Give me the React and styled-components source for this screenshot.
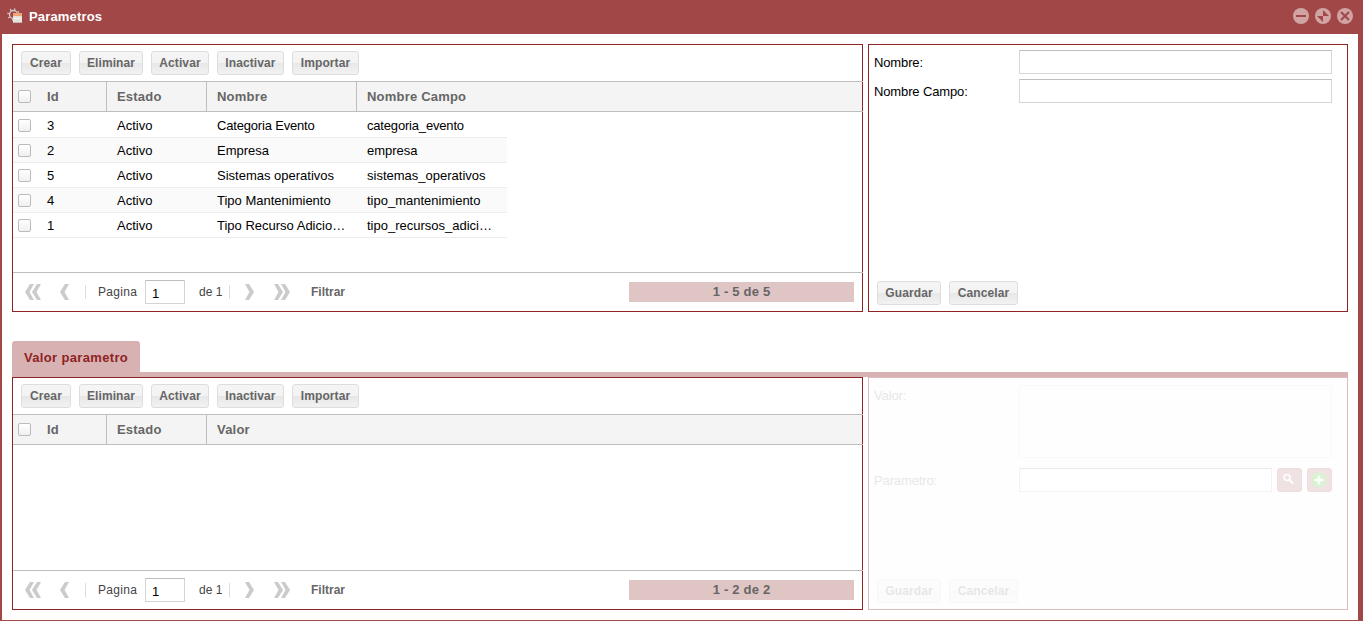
import React from "react";
import styled, { createGlobalStyle } from "styled-components";

const GlobalStyle = createGlobalStyle`
  * { box-sizing: border-box; }
  body { margin: 0; background: #fff; font-family: "Liberation Sans", Arial, sans-serif; font-size: 13px; color: #000; }
`;

const Window = styled.div`
  width: 1363px;
  height: 621px;
  display: flex;
  flex-direction: column;
  background: #fff;
  border: solid #a24747;
  border-width: 0 5px 1px 2px;
`;

const TitleBar = styled.header`
  height: 34px;
  flex: none;
  margin: 0 -5px 0 -2px;
  padding: 0 10px 2px 7px;
  display: flex;
  align-items: center;
  background: #a24747;
  color: #fff;
`;

const Title = styled.h1`
  margin: 0 auto 0 6px;
  padding-top: 2px;
  font-size: 13px;
  line-height: 16px;
  font-weight: bold;
  letter-spacing: 0.17px;
`;

const WindowTools = styled.div`
  display: flex;
  gap: 6px;
  svg { display: block; }
`;

const Content = styled.main`
  flex: 1;
  display: flex;
  flex-direction: column;
  padding: 10px 10px 10px 10px;
`;

const Split = styled.section`
  display: grid;
  grid-template-columns: 851px 480px;
  column-gap: 5px;
  height: ${(p) => p.$height}px;
`;

const Panel = styled.div`
  display: flex;
  flex-direction: column;
  min-width: 0;
  border: 1px solid ${(p) => (p.$muted ? "#dcbcbc" : "#8e2323")};
  background: ${(p) => (p.$muted ? "#fefefe" : "#fff")};
`;

const Toolbar = styled.div`
  display: flex;
  gap: 8px;
  padding: 6px 8px;
  height: 36px;
  flex: none;
`;

const Button = styled.button`
  width: ${(p) => p.$width}px;
  height: 24px;
  padding: 0 0 1px;
  border: 1px solid #ddd;
  border-radius: 3px;
  background: linear-gradient(#f5f5f5 0, #f3f3f3 50%, #e7e7e7 50%, #f2f2f2 100%);
  color: #666;
  font: bold 12px/20px "Liberation Sans", Arial, sans-serif;
  letter-spacing: 0.1px;
  white-space: nowrap;
`;

const HeadRow = styled.div`
  display: flex;
  height: 31px;
  flex: none;
  margin-right: -1px;
  border: solid #bebebe;
  border-width: 1px 0;
  background: #f4f4f4;
  position: relative;
`;

const HeadEdge = styled.span`
  width: 1px;
  margin-left: auto;
  background: #8e2323;
`;

const cellPadding = "0 9px 0 10px";

const HeadCell = styled.div`
  width: ${(p) => p.$width}px;
  padding: ${(p) => (p.$first ? "0 5px" : cellPadding)};
  display: flex;
  align-items: center;
  border-right: ${(p) => (p.$last ? "0" : "1px solid #bebebe")};
  color: #666;
  font-weight: bold;
  letter-spacing: 0.2px;
  white-space: nowrap;
`;

const Check = styled.span`
  width: 13px;
  height: 13px;
  flex: none;
  margin-right: ${(p) => p.$gap || 0}px;
  border: 1px solid #bbb;
  border-radius: 2px;
  background: linear-gradient(#fff, #f0f0f0);
`;

const Body = styled.div`
  flex: 1;
  padding-top: 1px;
`;

const Row = styled.div`
  width: 494px;
  height: 25px;
  display: flex;
  border-bottom: 1px solid #ededed;
  background: ${(p) => (p.$odd ? "#fafafa" : "#fff")};
`;

const Cell = styled.div`
  width: ${(p) => p.$width}px;
  padding: ${(p) => (p.$first ? "0 5px" : cellPadding)};
  display: ${(p) => (p.$first ? "flex" : "block")};
  align-items: center;
  white-space: nowrap;
  line-height: 25px;
  letter-spacing: ${(p) => (p.$tight ? -0.18 : 0)}px;
`;

const Footer = styled.footer`
  height: 39px;
  flex: none;
  display: flex;
  align-items: center;
  margin-right: -1px;
  padding: 0 9px 1px 12px;
  border-top: 1px solid #bebebe;
  font-size: 12px;
  color: #444;
  white-space: nowrap;
  svg { flex: none; display: block; }
`;

const FootGap = styled.span`
  width: ${(p) => p.$w}px;
  flex: none;
`;

const Separator = styled.span`
  width: 1px;
  height: 14px;
  flex: none;
  background: #ddd;
`;

const Word = styled.span`
  width: ${(p) => p.$width}px;
  flex: none;
  letter-spacing: ${(p) => p.$spacing || 0}px;
`;

const PageInput = styled.input`
  width: 40px;
  height: 24px;
  padding: 3px 6px 0;
  border: 1px solid #d4d4d4;
  border-top-color: #bebebe;
  font: 13px "Liberation Sans", Arial, sans-serif;
  color: #000;
  background: #fff;
`;

const Filter = styled.span`
  font-weight: bold;
  color: #666;
`;

const Count = styled.span`
  width: 225px;
  height: 20px;
  margin-left: auto;
  background: #e0c5c5;
  color: #666;
  text-align: center;
  font: bold 13px/20px "Liberation Sans", Arial, sans-serif;
  letter-spacing: 0.2px;
`;

const Form = styled.div`
  flex: 1;
  display: flex;
  flex-direction: column;
  gap: ${(p) => p.$gap}px;
  padding: ${(p) => p.$top}px 15px 0 5px;
`;

const Field = styled.label`
  display: grid;
  grid-template-columns: 145px 1fr;
`;

const Controls = styled.span`
  display: flex;
  gap: 5px;
`;

const Input = styled.input`
  flex: 1;
  min-width: 0;
  width: 100%;
  height: 24px;
  padding: 0 5px;
  border: 1px solid ${(p) => (p.$muted ? "#f2f2f2" : "#d6d6d6")};
  border-top-color: ${(p) => (p.$muted ? "#e9e9e9" : "#bebebe")};
  background: #fff;
`;

const TextArea = styled.textarea`
  display: block;
  width: 100%;
  height: 73px;
  resize: none;
  border: 1px solid #f9f9f9;
  background: #fefefe;
`;

const Label = styled.span`
  padding-top: ${(p) => (p.$top ? 0 : 2)}px;
  color: ${(p) => (p.$muted ? "#e8e8e8" : "#000")};
  line-height: 22px;
  letter-spacing: -0.13px;
  white-space: nowrap;
`;

const IconButton = styled.button`
  width: 25px;
  height: 24px;
  padding: 0;
  border: 1px solid #efdcdc;
  border-radius: 3px;
  background: #f0e2e2;
  svg { display: block; }
`;

const Actions = styled.div`
  display: flex;
  gap: 8px;
  padding: 0 8px 6px;
  opacity: ${(p) => (p.$muted ? 0.15 : 1)};
`;

const TabStrip = styled.nav`
  margin-top: 29px;
  height: 36px;
  flex: none;
  border-bottom: 5px solid #d8b2b2;
`;

const Tab = styled.span`
  display: block;
  width: 128px;
  height: 31px;
  padding-left: 12px;
  border-radius: 3px 3px 0 0;
  background: #d8b2b2;
  color: #8e2323;
  font-weight: bold;
  line-height: 33px;
  letter-spacing: 0.34px;
  white-space: nowrap;
`;

const AppIcon = () => (
  <svg width="16" height="16" viewBox="0 0 16 16">
    <circle cx="6.5" cy="6.5" r="4" fill="none" stroke="#d5d0cd" strokeWidth="1.3" />
    <circle cx="6.5" cy="6.5" r="5.5" fill="none" stroke="#d5d0cd" strokeWidth="1.4" strokeDasharray="1.3 3.02" />
    <rect x="6" y="5" width="9" height="10" fill="#e6e3dc" />
    <rect x="6" y="5" width="9" height="3" fill="#f0a477" />
    <path d="M6 14.5h9" stroke="#c3bdb8" />
    <path d="M7 10.5h7" stroke="#f4f2ee" />
  </svg>
);

const ToolIcon = ({ type }) => (
  <svg width="16" height="16" viewBox="0 0 16 16">
    <circle cx="8" cy="8" r="8" fill="#d1a3a3" />
    {type === "min" && <rect x="3" y="7" width="10" height="2" fill="#a24747" />}
    {type === "max" && <path d="M8 2L14 8H8ZM2 8H8V14Z" fill="#a24747" />}
    {type === "close" && <path d="M4 4l8 8M12 4l-8 8" stroke="#a24747" strokeWidth="2" />}
  </svg>
);

const Chevrons = ({ count = 1, flip }) => {
  const w = count === 2 ? 16 : 9;
  return (
    <svg width={w} height="16" viewBox={`0 0 ${w} 16`}>
      <g fill="#cbcbcb" transform={flip ? `translate(${w} 0) scale(-1 1)` : undefined}>
        <path d="M5 0H9L4.5 8L9 16H5L0 8Z" />
        {count === 2 && <path d="M12 0H16L11.5 8L16 16H12L7 8Z" />}
      </g>
    </svg>
  );
};

const SearchIcon = () => (
  <svg width="23" height="22" viewBox="0 0 23 22">
    <circle cx="9" cy="8.5" r="3" fill="none" stroke="#fff" strokeWidth="1.7" />
    <path d="M11.3 10.8L14.5 14" stroke="#fff" strokeWidth="2.2" strokeLinecap="round" />
  </svg>
);

const AddIcon = () => (
  <svg width="23" height="22" viewBox="0 0 23 22">
    <circle cx="11" cy="11" r="7.3" fill="#d8f3cf" stroke="#e2efd9" />
    <path d="M11 6.5v9M6.5 11h9" stroke="#fff" strokeWidth="2.6" />
  </svg>
);

const actions = [["Crear", 50], ["Eliminar", 64], ["Activar", 58], ["Inactivar", 67], ["Importar", 67]];

const parameters = [
  ["3", "Activo", "Categoria Evento", "categoria_evento"],
  ["2", "Activo", "Empresa", "empresa"],
  ["5", "Activo", "Sistemas operativos", "sistemas_operativos"],
  ["4", "Activo", "Tipo Mantenimiento", "tipo_mantenimiento"],
  ["1", "Activo", "Tipo Recurso Adicio…", "tipo_recursos_adici…"],
];

const widths = [94, 100, 150, 150];

const ListPanel = ({ columns, rows, count }) => (
  <Panel>
    <Toolbar>
      {actions.map(([name, width]) => <Button key={name} $width={width}>{name}</Button>)}
    </Toolbar>
    <HeadRow>
      {columns.map((name, i) => (
        <HeadCell key={name} $width={widths[i]} $first={i === 0} $last={i === columns.length - 1}>
          {i === 0 && <Check $gap={16} />}
          {name}
        </HeadCell>
      ))}
      <HeadEdge />
    </HeadRow>
    <Body>
      {rows.map((row, r) => (
        <Row key={row[0]} $odd={r % 2 === 1}>
          {row.map((text, i) => (
            <Cell key={i} $width={widths[i]} $first={i === 0} $tight={r === 0 && i > 1}>
              {i === 0 && <Check $gap={16} />}
              {text}
            </Cell>
          ))}
        </Row>
      ))}
    </Body>
    <Footer>
      <Chevrons count={2} /><FootGap $w={19} />
      <Chevrons /><FootGap $w={16} />
      <Separator /><FootGap $w={12} />
      <Word $width={47} $spacing={0.3}>Pagina</Word>
      <PageInput defaultValue="1" /><FootGap $w={14} />
      <Word $width={30}>de 1</Word>
      <Separator /><FootGap $w={15} />
      <Chevrons flip /><FootGap $w={20} />
      <Chevrons count={2} flip /><FootGap $w={21} />
      <Filter>Filtrar</Filter>
      <Count>{count}</Count>
    </Footer>
  </Panel>
);

const FormActions = ({ muted }) => (
  <Actions $muted={muted}>
    <Button $width={64}>Guardar</Button>
    <Button $width={69}>Cancelar</Button>
  </Actions>
);

export default function App() {
  return (
    <>
      <GlobalStyle />
      <Window>
        <TitleBar>
          <AppIcon />
          <Title>Parametros</Title>
          <WindowTools>
            <ToolIcon type="min" />
            <ToolIcon type="max" />
            <ToolIcon type="close" />
          </WindowTools>
        </TitleBar>
        <Content>
          <Split $height={268}>
            <ListPanel columns={["Id", "Estado", "Nombre", "Nombre Campo"]} rows={parameters} count="1 - 5 de 5" />
            <Panel>
              <Form $gap={5} $top={5}>
                <Field><Label>Nombre:</Label><Input /></Field>
                <Field><Label>Nombre Campo:</Label><Input /></Field>
              </Form>
              <FormActions />
            </Panel>
          </Split>
          <TabStrip><Tab>Valor parametro</Tab></TabStrip>
          <Split $height={233}>
            <ListPanel columns={["Id", "Estado", "Valor"]} rows={[]} count="1 - 2 de 2" />
            <Panel $muted>
              <Form $gap={10} $top={7}>
                <Field><Label $muted $top>Valor:</Label><TextArea /></Field>
                <Field>
                  <Label $muted>Parametro:</Label>
                  <Controls>
                    <Input $muted />
                    <IconButton><SearchIcon /></IconButton>
                    <IconButton><AddIcon /></IconButton>
                  </Controls>
                </Field>
              </Form>
              <FormActions muted />
            </Panel>
          </Split>
        </Content>
      </Window>
    </>
  );
}
